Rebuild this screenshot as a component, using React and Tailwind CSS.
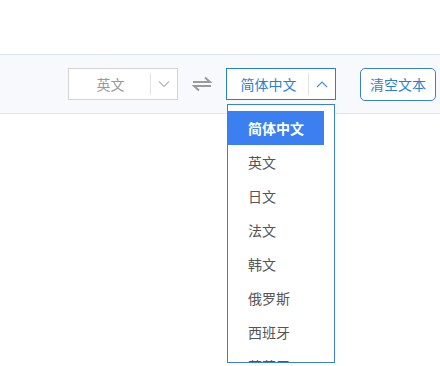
import React from 'react';

const langs = ['简体中文', '英文', '日文', '法文', '韩文', '俄罗斯', '西班牙', '葡萄牙'];

function Chevron({ up, className }) {
  return (
    <svg width="12" height="8" viewBox="0 0 12 8" className={className} fill="none" stroke="currentColor" strokeWidth="1.2">
      {up ? <path d="M1 7 L6 2 L11 7" /> : <path d="M1 1.5 L6 6.5 L11 1.5" />}
    </svg>
  );
}

export default function App() {
  return (
    <div className="w-[440px] h-[366px] bg-white overflow-hidden relative" style={{ fontFamily: '"Noto Sans CJK SC", "Noto Sans", sans-serif' }}>
      <div className="h-[54px]" />
      {/* Toolbar */}
      <div className="h-[60px] bg-[#f7f9fc] border-y border-[#dde6f0] flex items-center">
        <div className="flex-1" />
        {/* source select */}
        <div className="w-[110px] h-[32px] bg-white border border-[#d3d3d3] flex items-center">
          <span className="flex-1 text-center text-[14px] text-[#999] pl-[2px]">英文</span>
          <div className="w-px h-[22px] bg-[#e2e2e2]" />
          <div className="w-[26px] flex justify-center text-[#b5b5b5]">
            <Chevron />
          </div>
        </div>
        {/* swap */}
        <div className="w-[48px] flex justify-center">
          <svg width="20" height="16" viewBox="0 0 20 16" fill="none" stroke="#9a9a9a" strokeWidth="2">
            <path d="M1 6 H18 L13 1.5" />
            <path d="M19 10 H2 L7 14.5" />
          </svg>
        </div>
        {/* target select */}
        <div className="w-[110px] h-[32px] bg-white border border-[#2a7fd4] flex items-center">
          <span className="flex-1 text-center text-[14px] text-[#2b7fd2] pl-[2px]">简体中文</span>
          <div className="w-px h-[22px] bg-[#e2e2e2]" />
          <div className="w-[26px] flex justify-center text-[#4a8fd8]">
            <Chevron up />
          </div>
        </div>
        <div className="w-[24px]" />
        <button className="w-[76px] h-[33px] bg-white border border-[#3a80d6] rounded-[5px] text-[14px] text-[#2b7fd2]">清空文本</button>
        <div className="w-[4px]" />
      </div>

      {/* dropdown */}
      <div className="absolute left-[227px] top-[104px] w-[108px] h-[259px] bg-white border border-[#3d7fd6] overflow-hidden">
        <ul className="pt-[6px] pr-[10px]">
          {langs.map((l, i) => (
            <li
              key={l}
              className={`h-[34px] flex items-center pl-[20px] text-[14px] ${i === 0 ? 'bg-[#3b7ff0] text-white font-bold' : 'text-[#555]'}`}
            >
              {l}
            </li>
          ))}
        </ul>
      </div>
    </div>
  );
}
